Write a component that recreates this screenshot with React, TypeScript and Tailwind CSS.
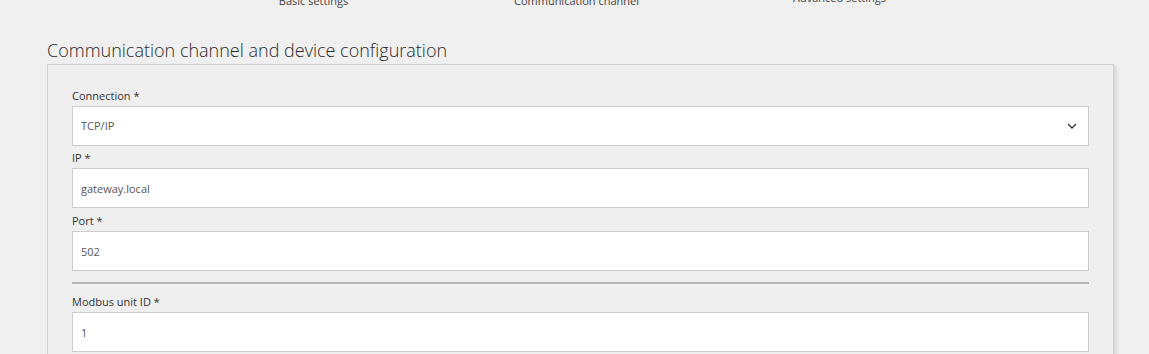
import React, { useState } from "react";

function Field({ label, value, onChange, className }: { label: string; value: string; onChange: (v: string) => void; className: string }) {
    return (
        <div className={className}>
            <label className="block text-[11px] leading-[16px] text-[#333] mb-[2px]">{label}</label>
            <input
                value={value}
                onChange={(e) => onChange(e.target.value)}
                className="block w-full h-[40px] px-[8px] bg-white border border-[#cccccc] text-[11px] text-[#555] focus:outline-none"
            />
        </div>
    );
}

export default function App() {
    const [connection, setConnection] = useState("TCP/IP");
    const [ip, setIp] = useState("gateway.local");
    const [port, setPort] = useState("502");
    const [unitId, setUnitId] = useState("1");

    return (
        <div className="min-h-screen bg-[#f0f0f0] font-['Open_Sans',sans-serif] overflow-hidden">
            {/* step labels, mostly scrolled out of view */}
            <div className="flex ml-[182px] -mt-[7px] h-[16px] text-[11px] leading-[16px] text-[#444]">
                <div className="w-[263px] text-center">Basic settings</div>
                <div className="w-[263px] text-center">Communication channel</div>
                <div className="w-[263px] text-center -mt-[3px]">Advanced settings</div>
            </div>

            <h2 className="ml-[47px] mt-[28px] text-[18px] leading-[27px] font-light text-[#2a2a2a]">
                Communication channel and device configuration
            </h2>

            <div className="ml-[47px] w-[1067px] bg-[#efefef] border border-[#d2d2d2] shadow-[2px_2px_4px_rgba(0,0,0,0.12)] px-[24px] pt-[23px] pb-[20px]">
                <div>
                    <label className="block text-[11px] leading-[16px] text-[#333] mb-[2px]">Connection *</label>
                    <div className="relative">
                        <select
                            value={connection}
                            onChange={(e) => setConnection(e.target.value)}
                            className="block w-full h-[40px] px-[8px] bg-white border border-[#cccccc] text-[11px] text-[#555] appearance-none focus:outline-none"
                        >
                            <option>TCP/IP</option>
                            <option>Serial</option>
                        </select>
                        <svg
                            className="absolute right-[12px] top-[17px] pointer-events-none"
                            width="10"
                            height="6"
                            viewBox="0 0 10 6"
                            fill="none"
                        >
                            <path d="M1 1l4 4 4-4" stroke="#333" strokeWidth="1.3" />
                        </svg>
                    </div>
                </div>

                <Field className="mt-[4px]" label="IP *" value={ip} onChange={setIp} />
                <Field className="mt-[5px]" label="Port *" value={port} onChange={setPort} />

                <div className="h-[2px] bg-[#b5b5b5] mt-[11px] mb-[10px]" />

                <Field className="" label="Modbus unit ID *" value={unitId} onChange={setUnitId} />
            </div>
        </div>
    );
}
